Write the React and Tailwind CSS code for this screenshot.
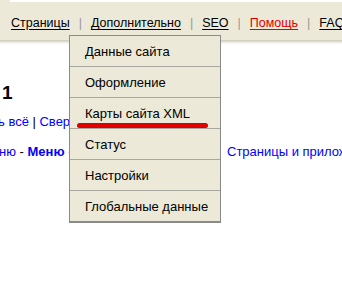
import React from 'react';

const NAV = [
  { label: 'Страницы', red: false },
  { label: 'Дополнительно', red: false },
  { label: 'SEO', red: false },
  { label: 'Помощь', red: true },
  { label: 'FAQ', red: false },
];

const MENU = [
  'Данные сайта',
  'Оформление',
  'Карты сайта XML',
  'Статус',
  'Настройки',
  'Глобальные данные',
];

export default function App() {
  return (
    <div className="relative w-[342px] h-[294px] overflow-hidden bg-white font-['Liberation_Sans',Arial,sans-serif] text-[13px] text-black">
      {/* ── Top bar ── */}
      <div className="h-[40px] bg-[#ECE9D8]">
        <div className="h-[2px] ml-[10px] bg-white" />
        <div className="flex items-center whitespace-nowrap pl-[11px] pt-[14px] leading-[15px] text-[12.5px]">
          {NAV.map((item, i) => (
            <React.Fragment key={item.label}>
              {i > 0 && <span className="mx-[9px] text-[#9a9a9a]">|</span>}
              <span className={`underline underline-offset-[2px] ${item.red ? 'text-[#e00000]' : 'text-black'}`}>
                {item.label}
              </span>
            </React.Fragment>
          ))}
        </div>
      </div>
      <div className="h-[4px] bg-gradient-to-b from-[#cdc9b8] to-white" />

      {/* ── Page content ── */}
      <div className="whitespace-nowrap">
        <div className="pt-[38px] pl-[2px] text-[19px] font-bold leading-[22px]">1</div>
        <div className="mt-[10px] leading-[15px] -ml-[2px]">
          <span className="text-[#0000ff]">ь всё</span>
          <span> | </span>
          <span className="text-[#0000ff]">Свернуть всё</span>
        </div>
        <div className="mt-[15px] flex leading-[15px]">
          <div className="w-[227px] shrink-0 overflow-hidden">
            <span className="-ml-[1px] text-[#0000ff]">ню</span>
            <span>&nbsp;-&nbsp;</span>
            <span className="font-bold text-[#0000ff]">Меню «сайта»</span>
          </div>
          <span className="text-[#0000ff]">Страницы и приложения</span>
        </div>
      </div>

      {/* ── Dropdown ── */}
      <div className="absolute left-[69px] top-[35px] w-[152px] border border-[#8a8a8a] border-b-2 bg-[#ECE9D8]">
        {MENU.map((item, i) => (
          <div
            key={item}
            className={`flex items-center pl-[15px] leading-[15px] ${i > 0 ? 'h-[31px] border-t border-[#a8a8a0]' : 'h-[30px]'}`}
          >
            {item}
          </div>
        ))}
      </div>

      {/* ── Red annotation stroke ── */}
      <div className="absolute left-[77px] top-[123px] w-[131px] h-[5px] rounded-full bg-[#e00000]" />
    </div>
  );
}
